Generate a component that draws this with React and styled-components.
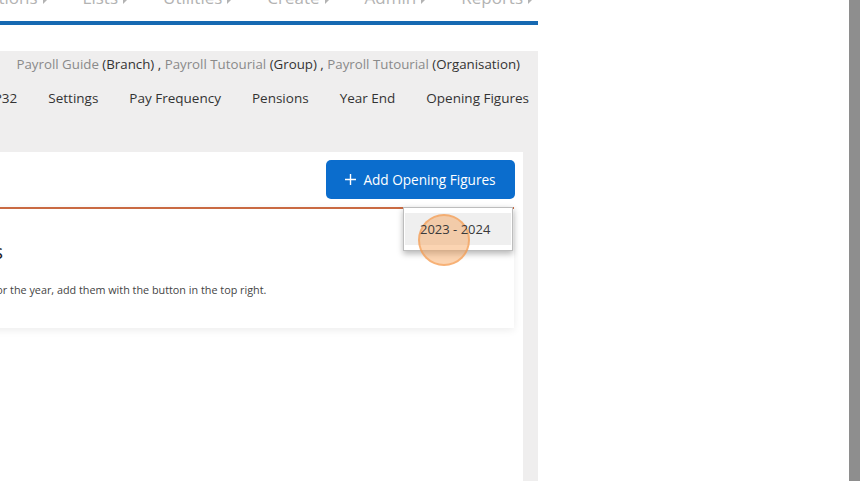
import React from 'react';
import styled, { createGlobalStyle } from 'styled-components';

const GlobalStyle = createGlobalStyle`
  html, body {
    margin: 0;
    padding: 0;
    background: #fff;
    font-family: "Open Sans", "Liberation Sans", sans-serif;
  }
`;

const Page = styled.div`
  display: flex;
  width: 860px;
  height: 481px;
  overflow: hidden;
`;

const AppFrame = styled.div`
  width: 538px;
  flex-shrink: 0;
  display: flex;
  flex-direction: column;
  overflow: hidden;
`;

const Blank = styled.div`
  flex: 1;
  background: #fff;
`;

const ScrollEdge = styled.div`
  width: 11px;
  background: #8e8e8e;
`;

const NavBar = styled.div`
  height: 21px;
  display: flex;
  justify-content: flex-end;
  align-items: flex-end;
  gap: 36px;
  padding-right: 6px;
`;

const NavItem = styled.div`
  flex-shrink: 0;
  margin-bottom: 13px;
  font-size: 17px;
  line-height: 20px;
  color: #b3b3b3;
  white-space: nowrap;
  display: flex;
  align-items: center;
  gap: 5px;
`;

const Caret = styled.span`
  width: 0;
  height: 0;
  border-top: 4px solid transparent;
  border-bottom: 4px solid transparent;
  border-left: 4px solid #b3b3b3;
  margin-top: 3px;
`;

const BlueRule = styled.div`
  height: 4px;
  background: #1669b2;
  margin-bottom: 26px;
`;

const Header = styled.div`
  height: 101px;
  flex-shrink: 0;
  background: #efeeee;
  display: flex;
  flex-direction: column;
  align-items: flex-end;
  padding-top: 4px;
  box-sizing: border-box;
`;

const Breadcrumb = styled.div`
  flex-shrink: 0;
  font-size: 13.3px;
  line-height: 19px;
  color: #333;
  white-space: nowrap;
  margin-right: 18px;
`;

const Crumb = styled.span`
  color: #8a8a8a;
`;

const Tabs = styled.div`
  display: flex;
  justify-content: flex-end;
  gap: 31px;
  margin-top: 15px;
  padding-right: 9px;
  box-sizing: border-box;
  width: 100%;
`;

const Tab = styled.div`
  flex-shrink: 0;
  font-size: 13.5px;
  line-height: 19px;
  color: #333;
  white-space: nowrap;
`;

const Body = styled.div`
  flex: 1;
  min-height: 0;
  display: flex;
  background: #efeeee;
`;

const Panel = styled.div`
  flex: 1;
  min-width: 0;
  background: #fff;
  padding: 8px 8px 0 0;
  display: flex;
  flex-direction: column;
  align-items: flex-end;
  gap: 8px;
`;

const GutterStrip = styled.div`
  width: 15px;
  flex-shrink: 0;
`;

const ButtonWrap = styled.div`
  position: relative;
  flex-shrink: 0;
`;

const AddButton = styled.button`
  width: 189px;
  height: 39px;
  border: none;
  border-radius: 5px;
  background: #0b6dcd;
  color: #fff;
  font-family: "Open Sans", "Liberation Sans", sans-serif;
  font-size: 13.6px;
  display: flex;
  align-items: center;
  justify-content: center;
  gap: 7px;
  padding: 0 0 1px;
`;

const Menu = styled.div`
  position: absolute;
  top: 47px;
  right: 2px;
  width: 110px;
  height: 44px;
  box-sizing: border-box;
  background: #fff;
  border: 1px solid #bdbdbd;
  box-shadow: 0 3px 6px rgba(0, 0, 0, 0.28);
  padding: 5px 1px 0;
  z-index: 2;
`;

const MenuItem = styled.div`
  position: relative;
  height: 32px;
  background: #efefef;
  font-size: 13px;
  color: #3a3a3a;
  display: flex;
  align-items: center;
  padding-left: 15px;
`;

const MenuLabel = styled.span`
  position: relative;
`;

const ClickMark = styled.div`
  position: absolute;
  left: 13px;
  top: 1px;
  width: 52px;
  height: 52px;
  border-radius: 50%;
  background: rgba(247, 160, 85, 0.45);
  border: 2px solid rgba(244, 150, 70, 0.55);
  box-sizing: border-box;
`;

const Card = styled.div`
  align-self: stretch;
  flex-shrink: 0;
  margin-left: -160px;
  margin-right: 1px;
  height: 121px;
  box-sizing: border-box;
  padding-left: 11px;
  background: #fff;
  border-top: 2px solid #c96a42;
  box-shadow: 0 2px 8px rgba(0, 0, 0, 0.08);
  display: flex;
  flex-direction: column;
  align-items: flex-start;
`;

const CardTitle = styled.div`
  margin-top: 30px;
  font-size: 20px;
  line-height: 26px;
  color: #222;
  white-space: nowrap;
`;

const CardText = styled.div`
  margin-top: 18px;
  margin-left: 3px;
  font-size: 10.8px;
  line-height: 14px;
  color: #444;
  white-space: nowrap;
`;

const navItems = ['Transactions', 'Lists', 'Utilities', 'Create', 'Admin', 'Reports'];
const tabs = ['FPS', 'P32', 'Settings', 'Pay Frequency', 'Pensions', 'Year End', 'Opening Figures'];

const PlusIcon = () => (
  <svg width="11" height="11" viewBox="0 0 11 11">
    <path d="M5.5 0v11M0 5.5h11" stroke="#fff" strokeWidth="1.4" />
  </svg>
);

export default function App() {
  return (
    <>
      <GlobalStyle />
      <Page>
        <AppFrame>
          <NavBar>
            {navItems.map((n) => (
              <NavItem key={n}>
                {n}
                <Caret />
              </NavItem>
            ))}
          </NavBar>
          <BlueRule />
          <Header>
            <Breadcrumb>
              <Crumb>Payroll Guide</Crumb> (Branch) , <Crumb>Payroll Tutourial</Crumb> (Group) ,{' '}
              <Crumb>Payroll Tutourial</Crumb> (Organisation)
            </Breadcrumb>
            <Tabs>
              {tabs.map((t) => (
                <Tab key={t}>{t}</Tab>
              ))}
            </Tabs>
          </Header>
          <Body>
            <Panel>
              <ButtonWrap>
                <AddButton>
                  <PlusIcon />
                  Add Opening Figures
                </AddButton>
                <Menu>
                  <MenuItem>
                    <ClickMark />
                    <MenuLabel>2023 - 2024</MenuLabel>
                  </MenuItem>
                </Menu>
              </ButtonWrap>
              <Card>
                <CardTitle>Opening Figures</CardTitle>
                <CardText>
                  If you have opening figures for the year, add them with the button in the top right.
                </CardText>
              </Card>
            </Panel>
            <GutterStrip />
          </Body>
        </AppFrame>
        <Blank />
        <ScrollEdge />
      </Page>
    </>
  );
}
